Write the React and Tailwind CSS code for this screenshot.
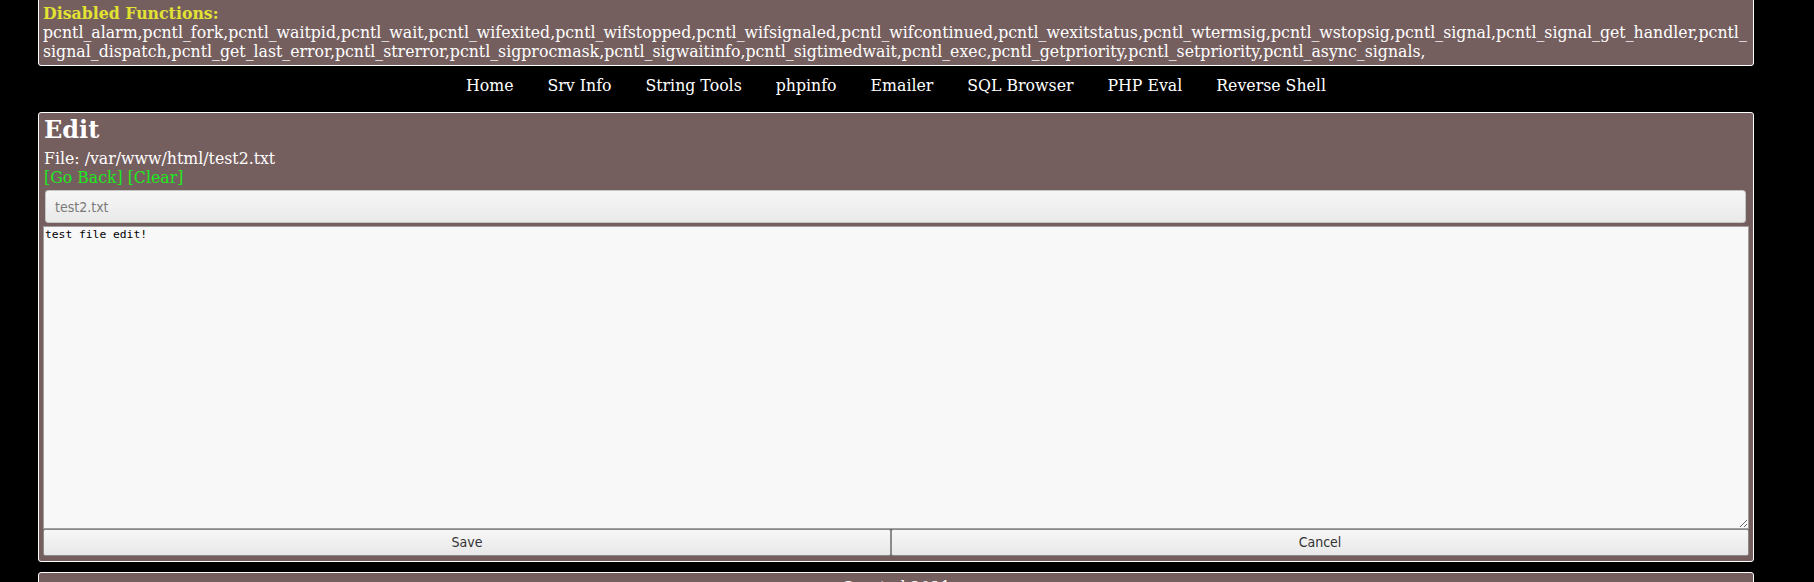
import React from 'react';

const disabledA =
  'pcntl_alarm,pcntl_fork,pcntl_waitpid,pcntl_wait,pcntl_wifexited,pcntl_wifstopped,pcntl_wifsignaled,pcntl_wifcontinued,pcntl_wexitstatus,pcntl_wtermsig,pcntl_wstopsig,pcntl_signal,pcntl_signal_get_handler,pcntl_';
const disabledB =
  'signal_dispatch,pcntl_get_last_error,pcntl_strerror,pcntl_sigprocmask,pcntl_sigwaitinfo,pcntl_sigtimedwait,pcntl_exec,pcntl_getpriority,pcntl_setpriority,pcntl_async_signals,';

const navItems = ['Home', 'Srv Info', 'String Tools', 'phpinfo', 'Emailer', 'SQL Browser', 'PHP Eval', 'Reverse Shell'];

const sans = "font-['DejaVu_Sans_Condensed','DejaVu_Sans',sans-serif] [font-stretch:condensed]";

export default function App() {
  return (
    <div className="h-[582px] overflow-hidden bg-black text-white text-[15.75px] leading-[19px] font-['DejaVu_Serif',serif]">
      <div className="ml-[38px] w-[1716px]">
        {/* server info panel (scrolled) */}
        <div className="-mt-[4px] pt-[7px] pb-[4px] px-[4px] bg-[#755e5e] border border-white rounded-[3px]">
          <div className="font-bold text-[#e2e232]">Disabled Functions:</div>
          <div className="break-all">
            {disabledA}
            <br />
            {disabledB}
          </div>
        </div>

        {/* menu */}
        <nav className="pt-[10px] pb-[17px] flex justify-center gap-[34px]">
          {navItems.map((item) => (
            <a key={item} href="#" className="text-white">
              {item}
            </a>
          ))}
        </nav>

        {/* edit panel */}
        <div className="bg-[#755e5e] border border-white rounded-[3px] px-[4px] pt-[3px] pb-[5px]">
          <h2 className="ml-[1px] text-[24px] leading-[28px] font-bold">Edit</h2>
          <div className="ml-[1px] mt-[5px]">File: /var/www/html/test2.txt</div>
          <div className="ml-[1px] text-[#1ee81e]">
            <a href="#">[Go Back]</a> <a href="#">[Clear]</a>
          </div>
          <input
            readOnly
            value="test2.txt"
            className={`${sans} block mt-[3px] ml-[2px] w-[1701px] h-[33px] pl-[9px] text-[14px] text-[#7a7a7a] bg-gradient-to-b from-[#f6f6f6] to-[#e9e9e9] border border-[#c4c4c4] rounded-[3px] outline-none`}
          />
          <textarea
            defaultValue="test file edit!"
            className="block mt-[3px] w-full h-[303px] p-[1px] font-['DejaVu_Sans_Mono',monospace] text-[11.3px] leading-[14px] text-black bg-[#f8f8f8] border border-[#a0a0a0] outline-none"
          />
          <div className={`${sans} flex h-[27px] text-[14px] text-[#333]`}>
            <button className="w-[848px] bg-gradient-to-b from-[#f7f7f7] to-[#e8e8e8] border border-[#8a8a8a] rounded-[2px]">
              Save
            </button>
            <button className="flex-1 bg-gradient-to-b from-[#f7f7f7] to-[#e8e8e8] border border-[#8a8a8a] rounded-[2px]">
              Cancel
            </button>
          </div>
        </div>

        {/* footer */}
        <div className="mt-[10px] pt-[5px] pb-[6px] bg-[#755e5e] border border-white rounded-[3px] text-center">
          Created 2021
        </div>
      </div>
    </div>
  );
}
